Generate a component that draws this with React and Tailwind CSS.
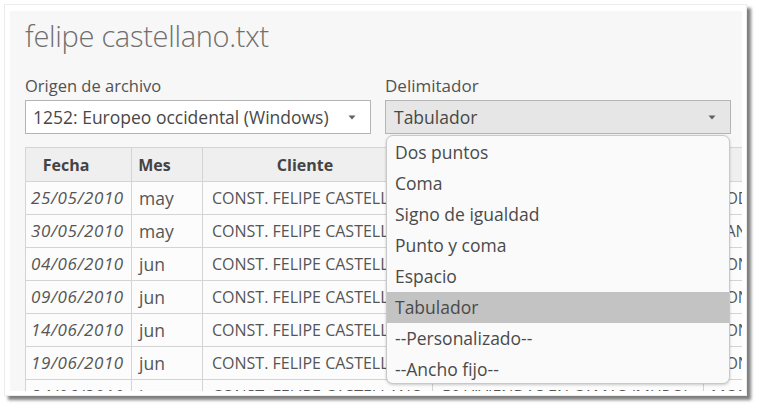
import React from "react";

const rows = [
  ["25/05/2010", "may", "CONST. FELIPE CASTELLANO", "50 VIVIENDAS EN CAMAS (MURO)", "MODIFICADO"],
  ["30/05/2010", "may", "CONST. FELIPE CASTELLANO", "50 VIVIENDAS EN CAMAS (MURO)", "MANTENIMIENTO"],
  ["04/06/2010", "jun", "CONST. FELIPE CASTELLANO", "50 VIVIENDAS EN CAMAS (MURO)", "MONTAJE"],
  ["09/06/2010", "jun", "CONST. FELIPE CASTELLANO", "50 VIVIENDAS EN CAMAS (MURO)", "MONTAJE"],
  ["14/06/2010", "jun", "CONST. FELIPE CASTELLANO", "50 VIVIENDAS EN CAMAS (MURO)", "MONTAJE"],
  ["19/06/2010", "jun", "CONST. FELIPE CASTELLANO", "50 VIVIENDAS EN CAMAS (MURO)", "MONTAJE"],
  ["24/06/2010", "jun", "CONST. FELIPE CASTELLANO", "50 VIVIENDAS EN CAMAS (MURO)", "MONTAJE"],
];

const options = [
  "Dos puntos",
  "Coma",
  "Signo de igualdad",
  "Punto y coma",
  "Espacio",
  "Tabulador",
  "--Personalizado--",
  "--Ancho fijo--",
];

function Caret() {
  return (
    <svg width="8" height="5" viewBox="0 0 8 5" className="shrink-0">
      <path d="M0.5 0.5 L7.5 0.5 L4 4.5 Z" fill="#606060" />
    </svg>
  );
}

export default function App() {
  const font = { fontFamily: '"Open Sans", "Noto Sans", sans-serif' };
  return (
    <div className="w-[760px] h-[410px] bg-white overflow-hidden pl-[4px] pt-[4px]" style={font}>
      <div className="w-[743px] h-[392px] bg-white border border-[#ececec] shadow-[4px_4px_3px_rgba(0,0,0,0.5)] pl-[5px] pt-[6px] pr-[4px] pb-[4px]">
        <div className="relative w-[732px] h-[380px] bg-[#f7f7f7] overflow-hidden pl-[15px] pt-[7px]">
          <div className="text-[29px] leading-[36px] font-light text-[#6f6f6f] tracking-[-0.3px]">
            felipe castellano.txt
          </div>
          <div className="flex gap-[14px] mt-[21px]">
            <div className="w-[346px]">
              <div className="text-[16.5px] leading-[22px] text-[#525252] mb-[3px]">Origen de archivo</div>
              <div className="h-[34px] bg-white border border-[#b4b4b4] flex items-center justify-between pl-[7px] pr-[14px] text-[17.5px] text-[#484848]">
                <span>1252: Europeo occidental (Windows)</span>
                <Caret />
              </div>
            </div>
            <div className="w-[346px]">
              <div className="text-[17px] leading-[22px] text-[#525252] mb-[3px]">Delimitador</div>
              <div className="h-[34px] bg-[#e6e6e6] border border-[#b4b4b4] flex items-center justify-between pl-[8px] pr-[14px] text-[17.5px] text-[#484848]">
                <span>Tabulador</span>
                <Caret />
              </div>
            </div>
          </div>

          <table className="mt-[13px] border-collapse text-[#555555] whitespace-nowrap">
            <thead>
              <tr className="h-[34px] bg-[#efefef] text-[16px] text-[#444444]">
                <th className="w-[106px] min-w-[106px] border border-[#d4d4d4] text-center pr-[25px] font-bold">Fecha</th>
                <th className="w-[71px] min-w-[71px] border border-[#d4d4d4] text-center pr-[25px] font-bold">Mes</th>
                <th className="w-[230px] min-w-[230px] border border-[#d4d4d4] text-center pr-[25px] font-bold">Cliente</th>
                <th className="w-[271px] min-w-[271px] border border-[#d4d4d4] text-center pr-[25px] font-bold">Obra</th>
                <th className="w-[120px] min-w-[120px] border border-[#d4d4d4] text-center pr-[25px] font-bold">Tipo</th>
              </tr>
            </thead>
            <tbody>
              {rows.map((r, i) => (
                <tr key={i} className="h-[33px] bg-[#fcfcfc]">
                  <td className="border border-[#d4d4d4] pl-[5px] italic text-[17px] tracking-[0.6px]">{r[0]}</td>
                  <td className="border border-[#d4d4d4] pl-[7px] text-[17.5px]">{r[1]}</td>
                  <td className="border border-[#d4d4d4] pl-[9px] text-[16px] max-w-[230px] overflow-hidden">{r[2]}</td>
                  <td className="border border-[#d4d4d4] pl-[9px] text-[16px]">{r[3]}</td>
                  <td className="border border-[#d4d4d4] pl-[7px] text-[16px]">{r[4]}</td>
                </tr>
              ))}
            </tbody>
          </table>

          <div className="absolute left-[376px] top-[124px] w-[344px] h-[249px] bg-[#fafafa] border border-[#c8c8c8] rounded-[7px] shadow-[0_1px_3px_rgba(0,0,0,0.2)] overflow-hidden pt-[1px]">
            {options.map((o) => (
              <div
                key={o}
                className={
                  "h-[31px] flex items-center pl-[8px] text-[17.5px] text-[#4a4a4a] " +
                  (o === "Tabulador" ? "bg-[#c3c3c3]" : "")
                }
              >
                {o}
              </div>
            ))}
          </div>
        </div>
      </div>
    </div>
  );
}
